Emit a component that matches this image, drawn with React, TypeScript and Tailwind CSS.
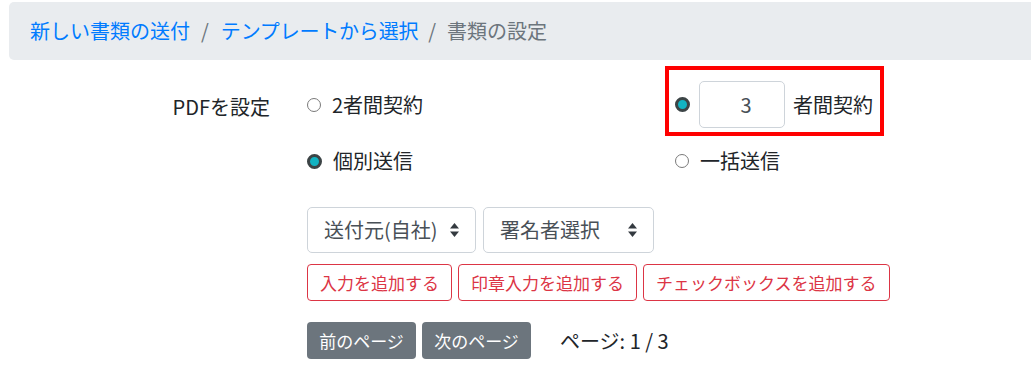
import React from 'react';

const font = { fontFamily: '"Noto Sans CJK JP", "Noto Sans", sans-serif' };

function Radio({ checked }: { checked?: boolean }) {
  return checked ? (
    <span className="inline-block w-[15px] h-[15px] rounded-full border-[3px] border-[#3c4446] bg-[#12b3c2] shrink-0" />
  ) : (
    <span className="inline-block w-[14px] h-[14px] rounded-full border border-[#7a7a7a] bg-white shrink-0" />
  );
}

function SelectBox({ label, width }: { label: string; width: string }) {
  return (
    <div className={`${width} h-[46px] flex items-center justify-between border border-[#ced4da] rounded-[5px] bg-white pl-[16px] pr-[15px] text-[20px] text-[#495057]`}>
      <span>{label}</span>
      <svg width="11" height="16" viewBox="0 0 11 16">
        <path d="M5.5 1 L10 6.5 H1 Z" fill="#343a40" />
        <path d="M5.5 15 L10 9.5 H1 Z" fill="#343a40" />
      </svg>
    </div>
  );
}

export default function App() {
  return (
    <div className="w-[1031px] h-[373px] overflow-hidden bg-white text-[#212529]" style={font}>
      {/* Breadcrumb */}
      <div className="mt-[2px] ml-[9px] w-[1040px] h-[58px] bg-[#e9ecef] rounded-[5px] flex items-center pl-[21px] text-[20px]">
        <span className="text-[#007bff]">新しい書類の送付</span>
        <span className="text-[#6c757d] pl-[11px] pr-[12px]">/</span>
        <span className="text-[#007bff] tracking-[-0.2px]">テンプレートから選択</span>
        <span className="text-[#6c757d] pl-[10px] pr-[11px]">/</span>
        <span className="text-[#6c757d]">書類の設定</span>
      </div>

      <div className="flex mt-[6px]">
        <div className="w-[270px] shrink-0 flex justify-end">
          <div className="mt-[17px] h-[47px] flex items-center text-[20px]">PDFを設定</div>
        </div>

        <div className="ml-[37px]">
          {/* Row 1 */}
          <div className="flex items-start">
            <div className="w-[358px] mt-[15px] h-[47px] flex items-center gap-[11px] text-[20px]">
              <Radio />
              <span>2者間契約</span>
            </div>
            <div className="border-4 border-[#ff0000] pt-[11px] pb-[4px] pl-[6px] pr-[7px]">
              <div className="h-[47px] flex items-center">
                <Radio checked />
                <div className="ml-[9px] w-[86px] h-[47px] border border-[#ced4da] rounded-[5px] flex items-center justify-center pl-[8px] text-[20px] text-[#495057]">
                  3
                </div>
                <span className="ml-[8px] text-[20px]">者間契約</span>
              </div>
            </div>
          </div>

          {/* Row 2 */}
          <div className="flex items-center mt-[11px] h-[28px] text-[20px]">
            <div className="w-[368px] flex items-center gap-[11px]">
              <Radio checked />
              <span>個別送信</span>
            </div>
            <div className="flex items-center gap-[11px]">
              <Radio />
              <span>一括送信</span>
            </div>
          </div>

          {/* Selects */}
          <div className="flex gap-[7px] mt-[32px]">
            <SelectBox label="送付元(自社)" width="w-[169px]" />
            <SelectBox label="署名者選択" width="w-[171px]" />
          </div>

          {/* Add buttons */}
          <div className="flex gap-[6px] mt-[11px]">
            {['入力を追加する', '印章入力を追加する', 'チェックボックスを追加する'].map((t) => (
              <div
                key={t}
                className="h-[37px] px-[12px] flex items-center border border-[#dc3545] rounded-[4px] text-[#dc3545] text-[17px]"
              >
                {t}
              </div>
            ))}
          </div>

          {/* Paging */}
          <div className="flex items-center mt-[21px]">
            <div className="h-[37px] w-[109px] flex items-center justify-center bg-[#6c757d] rounded-[4px] text-white text-[17px]">
              前のページ
            </div>
            <div className="ml-[6px] h-[37px] w-[109px] flex items-center justify-center bg-[#6c757d] rounded-[4px] text-white text-[17px]">
              次のページ
            </div>
            <span className="ml-[29px] text-[20px]">ページ: 1 / 3</span>
          </div>
        </div>
      </div>
    </div>
  );
}
